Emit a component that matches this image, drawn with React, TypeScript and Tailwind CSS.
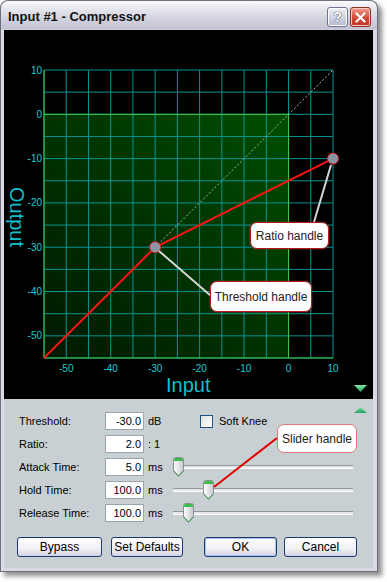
import React from "react";

const X = (d: number) => 44 + (d + 55) * (289 / 65);
const Y = (d: number) => 70 + (10 - d) * (288 / 65);
const steps = Array.from({ length: 14 }, (_, i) => -55 + i * 5);
const labels = [10, 0, -10, -20, -30, -40, -50];
const xLabels = [-50, -40, -30, -20, -10, 0, 10];

function Graph() {
  const tx = X(-30);
  const ty = Y(-30);
  return (
    <svg width={369} height={369} viewBox="4 30 369 369" className="block">
      <defs>
        <linearGradient id="greenArea" x1="0" y1="1" x2="1" y2="0">
          <stop offset="0" stopColor="#001800" />
          <stop offset="1" stopColor="#004e00" />
        </linearGradient>
        <linearGradient id="tri" x1="0" y1="0" x2="0" y2="1">
          <stop offset="0" stopColor="#7fe6a8" />
          <stop offset="1" stopColor="#23a05e" />
        </linearGradient>
      </defs>
      <rect x={X(-55)} y={Y(0)} width={X(0) - X(-55)} height={Y(-55) - Y(0)} fill="url(#greenArea)" />
      {steps.map((d) => (
        <line key={"v" + d} x1={X(d)} y1={Y(10)} x2={X(d)} y2={Y(-55)} stroke="#089494" strokeWidth={1} />
      ))}
      {steps.map((d) => (
        <line key={"h" + d} x1={X(-55)} y1={Y(d)} x2={X(10)} y2={Y(d)} stroke="#089494" strokeWidth={1} />
      ))}
      {/* axis + zero lines */}
      <line x1={X(-55)} y1={Y(10)} x2={X(-55)} y2={Y(-55)} stroke="#40c840" />
      <line x1={X(-55)} y1={Y(-55)} x2={X(10)} y2={Y(-55)} stroke="#40c840" />
      <line x1={X(-55)} y1={Y(0)} x2={X(0)} y2={Y(0)} stroke="#40c840" />
      <line x1={X(0)} y1={Y(0)} x2={X(0)} y2={Y(-55)} stroke="#40c840" />

      {labels.map((d) => (
        <text key={"yl" + d} x={42} y={Y(d) + 3.5} textAnchor="end" fontSize={10} fill="#1ccbd4" fontFamily="Liberation Sans, sans-serif">
          {d}
        </text>
      ))}
      {xLabels.map((d) => (
        <text key={"xl" + d} x={X(d)} y={372} textAnchor="middle" fontSize={10} fill="#1ccbd4" fontFamily="Liberation Sans, sans-serif">
          {d}
        </text>
      ))}
      <text x={166} y={392} fontSize={20} fill="#12bfcc" fontFamily="Liberation Sans, sans-serif">
        Input
      </text>
      <text x={10} y={187} fontSize={20} fill="#12bfcc" fontFamily="Liberation Sans, sans-serif" transform="rotate(90 10 187)">
        Output
      </text>

      <line x1={tx} y1={ty} x2={X(10)} y2={Y(10)} stroke="#a8b8b8" strokeWidth={1} strokeDasharray="2 2" />
      <polyline points={`${X(-55)},${Y(-55)} ${tx},${ty} ${X(10)},${Y(-10)}`} fill="none" stroke="#ff1414" strokeWidth={2} />
      <circle cx={tx} cy={ty} r={5.5} fill="#8a95a6" stroke="#e02020" strokeWidth={1} />
      <circle cx={X(10)} cy={Y(-10)} r={5.5} fill="#8a95a6" stroke="#e02020" strokeWidth={1} />

      <polygon points="354,385 367,385 360.5,392" fill="url(#tri)" />
    </svg>
  );
}

function Thumb() {
  return (
    <svg width={11} height={20} viewBox="0 0 11 20">
      <defs>
        <linearGradient id="thumbBody" x1="0" y1="0" x2="1" y2="0">
          <stop offset="0" stopColor="#ffffff" />
          <stop offset="1" stopColor="#c4c8cc" />
        </linearGradient>
      </defs>
      <path d="M0.5 2.5 Q0.5 0.5 2.5 0.5 H8.5 Q10.5 0.5 10.5 2.5 V14 L5.5 19.5 L0.5 14 Z" fill="url(#thumbBody)" stroke="#8c9094" />
      <path d="M1 2.5 Q1 1 2.5 1 H8.5 Q10 1 10 2.5 V4 H1 Z" fill="#3cbc4a" />
      <path d="M1 14 L5.5 19 L10 14" fill="none" stroke="#3aa046" />
    </svg>
  );
}

function Slider({ at }: { at: number }) {
  return (
    <div className="relative flex h-full w-[180px] items-center">
      <div className="h-[4px] w-full border-t border-b border-t-[#8f969a] border-b-white bg-[#e6e8ea]" />
      <div className="absolute top-[-1px]" style={{ left: at }}>
        <Thumb />
      </div>
    </div>
  );
}

function Row({ label, value, unit, children }: { label: string; value: string; unit: string; children?: React.ReactNode }) {
  return (
    <div className="flex h-[18px] items-center">
      <span className="w-[86px]">{label}</span>
      <div className="flex h-[18px] w-[39px] items-center justify-end border border-[#9aa5ab] bg-white pr-[2px]">{value}</div>
      <span className="ml-[4px] w-[25px]">{unit}</span>
      {children}
    </div>
  );
}

function Btn({ children, w, def }: { children: React.ReactNode; w: string; def?: boolean }) {
  return (
    <button
      className={`flex h-[20px] ${w} items-center justify-center rounded-[3px] border border-[#1b3b6e] bg-[linear-gradient(to_bottom,#ffffff,#f0f0f6_60%,#d2d4e4)] text-[12px] text-black ${
        def ? "shadow-[inset_0_0_0_1px_#a9c2ee]" : ""
      }`}
    >
      {children}
    </button>
  );
}

export default function App() {
  return (
    <div className="h-[582px] w-[387px] bg-white" style={{ fontFamily: "'Liberation Sans', Arial, sans-serif" }}>
      <div className="relative h-[572px] w-[378px] rounded-t-[8px] bg-[#6d6f82] p-px shadow-[4px_4px_5px_rgba(0,0,0,0.45)]">
        <div className="flex h-full flex-col rounded-t-[7px] bg-[linear-gradient(to_bottom,#fbfbfd_0px,#e6e6ee_8px,#cfcfdc_20px,#c2c2d2_28px,#dadae4_29px,#dadae4_100%)] pb-[3px] pl-[3px] pr-[4px]">
          {/* title bar */}
          <div className="flex h-[29px] items-center justify-between pl-[4px] pr-[2px] pt-[3px]">
            <span className="text-[13px] font-bold text-[#111]">Input #1 - Compressor</span>
            <div className="flex gap-[2px]">
              <div className="flex h-[20px] w-[21px] items-center justify-center rounded-[3px] border border-[#6d7390] bg-[linear-gradient(to_bottom,#eef0f8,#b4b9d2)] shadow-[inset_0_0_0_1px_#ffffff]">
                <span className="text-[14px] font-bold text-white [text-shadow:0_0_1px_#333,0_0_1px_#333]">?</span>
              </div>
              <div className="flex h-[20px] w-[21px] items-center justify-center rounded-[3px] border border-[#8a3028] bg-[linear-gradient(to_bottom,#f4a090,#d04a36_55%,#c03424)] shadow-[inset_0_0_0_1px_#f6c8c0]">
                <svg width={11} height={11} viewBox="0 0 11 11">
                  <path d="M1.5 1.5 L9.5 9.5 M9.5 1.5 L1.5 9.5" stroke="white" strokeWidth={2.2} strokeLinecap="round" />
                </svg>
              </div>
            </div>
          </div>

          {/* graph */}
          <div className="h-[369px] bg-black">
            <Graph />
          </div>

          {/* controls */}
          <div className="relative flex-1 bg-[#c8d0d4] pt-[13px] text-[11px] text-black">
            <svg className="absolute right-[6px] top-[8px]" width={13} height={6} viewBox="0 0 13 6">
              <defs>
                <linearGradient id="triUp" x1="0" y1="0" x2="0" y2="1">
                  <stop offset="0" stopColor="#7fe6a8" />
                  <stop offset="1" stopColor="#23a05e" />
                </linearGradient>
              </defs>
              <polygon points="6.5,0 13,6 0,6" fill="url(#triUp)" />
            </svg>
            <div className="flex flex-col gap-[5px] pl-[15px]">
              <Row label="Threshold:" value="-30.0" unit="dB">
                <div className="ml-[27px] h-[13px] w-[13px] border border-[#1c5180] bg-[linear-gradient(135deg,#e4e4dc,#ffffff)]" />
                <span className="ml-[6px]">Soft Knee</span>
              </Row>
              <Row label="Ratio:" value="2.0" unit=": 1" />
              <Row label="Attack Time:" value="5.0" unit="ms">
                <Slider at={0} />
              </Row>
              <Row label="Hold Time:" value="100.0" unit="ms">
                <Slider at={30} />
              </Row>
              <Row label="Release Time:" value="100.0" unit="ms">
                <Slider at={10} />
              </Row>
            </div>
            <div className="mt-[15px] flex pl-[13px]">
              <Btn w="w-[85px]">Bypass</Btn>
              <div className="ml-[9px]">
                <Btn w="w-[72px]">Set Defaults</Btn>
              </div>
              <div className="ml-[21px]">
                <Btn w="w-[73px]" def>
                  OK
                </Btn>
              </div>
              <div className="ml-[7px]">
                <Btn w="w-[73px]">Cancel</Btn>
              </div>
            </div>
          </div>
        </div>

        {/* annotation overlay */}
        <svg className="pointer-events-none absolute left-0 top-0" width={378} height={572}>
          <line x1={331} y1={165} x2={314} y2={222} stroke="#d6d6d6" strokeWidth={2} />
          <line x1={159} y1={251} x2={211} y2={296} stroke="#d6d6d6" strokeWidth={2} />
          <line x1={277} y1={438} x2={214} y2={487} stroke="#e40000" strokeWidth={2} />
        </svg>
        <div className="absolute left-[250px] top-[222px] flex h-[27px] w-[79px] items-center justify-center rounded-[7px] border border-[#b41a1a] bg-white text-[12px] text-[#222] shadow-[0_0_2px_rgba(220,80,80,0.6)]">
          Ratio handle
        </div>
        <div className="absolute left-[210px] top-[281px] flex h-[31px] w-[102px] items-center justify-center rounded-[7px] border border-[#b41a1a] bg-white text-[12px] text-[#222] shadow-[0_0_2px_rgba(220,80,80,0.6)]">
          Threshold handle
        </div>
        <div className="absolute left-[277px] top-[424px] flex h-[29px] w-[80px] items-center justify-center rounded-[7px] border-[1.5px] border-[#e07a7a] bg-white text-[12px] text-[#222]">
          Slider handle
        </div>
      </div>
    </div>
  );
}
